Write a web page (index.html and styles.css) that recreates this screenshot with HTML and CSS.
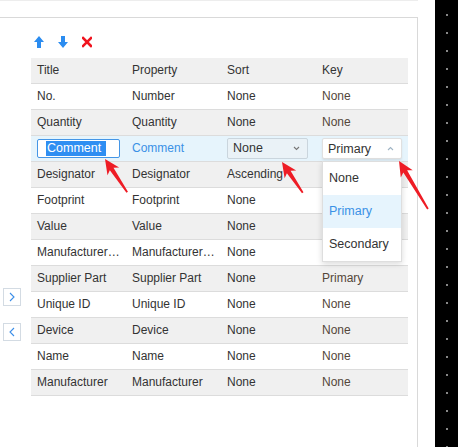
FILE: index.html
```html
<!DOCTYPE html>
<html>
<head>
<meta charset="utf-8">
<link rel="stylesheet" href="styles.css">
</head>
<body>
<div class="page">
  <div class="main">
    <div class="topgap"></div>
    <div class="panel">
      <div class="toolbar">
        <svg class="tool" width="10" height="12" viewBox="0 0 10 12"><path d="M5 0 L10 6 L7 6 L7 12 L3 12 L3 6 L0 6 Z" fill="#2b8cf0"/></svg>
        <svg class="tool" width="10" height="12" viewBox="0 0 10 12"><path d="M3 0 L7 0 L7 6 L10 6 L5 12 L0 6 L3 6 Z" fill="#2b8cf0"/></svg>
        <svg class="tool" width="10" height="12" viewBox="0 0 10 12"><path d="M1 2 L9 10 M9 2 L1 10" stroke="#f0141e" stroke-width="2.6" stroke-linecap="square"/></svg>
      </div>
      <div class="content">
        <div class="side">
          <div class="nav"><svg width="8" height="10" viewBox="0 0 8 10"><path d="M2 1 L6 5 L2 9" fill="none" stroke="#3b8ee8" stroke-width="1.1"/></svg></div>
          <div class="nav"><svg width="8" height="10" viewBox="0 0 8 10"><path d="M6 1 L2 5 L6 9" fill="none" stroke="#3b8ee8" stroke-width="1.1"/></svg></div>
        </div>
        <div class="table">
          <div class="row head"><div class="cell">Title</div><div class="cell">Property</div><div class="cell">Sort</div><div class="cell">Key</div></div>
          <div class="row"><div class="cell">No.</div><div class="cell">Number</div><div class="cell">None</div><div class="cell key">None</div></div>
          <div class="row alt"><div class="cell">Quantity</div><div class="cell">Quantity</div><div class="cell">None</div><div class="cell key">None</div></div>
          <div class="row selected">
            <div class="cell"><div class="edit"><span class="sel">Comment</span></div></div>
            <div class="cell blue">Comment</div>
            <div class="cell"><div class="select sort">None<svg class="chev" width="7" height="5" viewBox="0 0 7 5"><path d="M1 1 L3.5 3.5 L6 1" fill="none" stroke="#777" stroke-width="1.1"/></svg></div></div>
            <div class="cell keycell">
              <div class="select keysel">Primary<svg class="chev" width="7" height="5" viewBox="0 0 7 5"><path d="M1 4 L3.5 1.5 L6 4" fill="none" stroke="#9fb4c4" stroke-width="1.1"/></svg></div>
              <div class="dropdown">
                <div class="opt">None</div>
                <div class="opt active">Primary</div>
                <div class="opt">Secondary</div>
              </div>
            </div>
          </div>
          <div class="row alt"><div class="cell">Designator</div><div class="cell">Designator</div><div class="cell">Ascending</div><div class="cell key covered">Primary</div></div>
          <div class="row"><div class="cell">Footprint</div><div class="cell">Footprint</div><div class="cell">None</div><div class="cell key covered">None</div></div>
          <div class="row alt"><div class="cell">Value</div><div class="cell">Value</div><div class="cell">None</div><div class="cell key covered">None</div></div>
          <div class="row"><div class="cell">Manufacturer…</div><div class="cell">Manufacturer…</div><div class="cell">None</div><div class="cell key covered">None</div></div>
          <div class="row alt"><div class="cell">Supplier Part</div><div class="cell">Supplier Part</div><div class="cell">None</div><div class="cell key">Primary</div></div>
          <div class="row"><div class="cell">Unique ID</div><div class="cell">Unique ID</div><div class="cell">None</div><div class="cell key">None</div></div>
          <div class="row alt"><div class="cell">Device</div><div class="cell">Device</div><div class="cell">None</div><div class="cell key">None</div></div>
          <div class="row"><div class="cell">Name</div><div class="cell">Name</div><div class="cell">None</div><div class="cell key">None</div></div>
          <div class="row alt"><div class="cell">Manufacturer</div><div class="cell">Manufacturer</div><div class="cell">None</div><div class="cell key">None</div></div>
        </div>
      </div>
    </div>
  </div>
  <div class="gutter"></div>
  <div class="strip"></div>
  <svg class="arrows" width="458" height="447" viewBox="0 0 458 447">
    <polygon transform="translate(105 159) rotate(-123.7)" points="0,0 -15,-7 -12,-2.2 -40,-0.9 -40,0.9 -12,2.2 -15,7" fill="#ee1c25"/>
    <polygon transform="translate(282 162) rotate(-124.1)" points="0,0 -15,-7 -12,-2.2 -37,-0.9 -37,0.9 -12,2.2 -15,7" fill="#ee1c25"/>
    <polygon transform="translate(399 161) rotate(-121.1)" points="0,0 -15,-7 -12,-2.2 -56,-0.9 -56,0.9 -12,2.2 -15,7" fill="#ee1c25"/>
  </svg>
</div>
</body>
</html>
```

FILE: styles.css
```css
* { box-sizing: border-box; }
html, body { margin: 0; padding: 0; }
body {
  font-family: "Liberation Sans", Arial, sans-serif;
  font-size: 12px;
  color: #333;
  background: #fff;
}
.page {
  position: relative;
  display: flex;
  width: 458px;
  height: 447px;
  overflow: hidden;
}
.main {
  width: 418px;
  display: flex;
  flex-direction: column;
}
.topgap {
  height: 17px;
  border-top: 1px solid #ededed;
}
.panel {
  flex: 1;
  border-top: 1px solid #d9d9d9;
  border-right: 1px solid #d9d9d9;
  display: flex;
  flex-direction: column;
}
.toolbar {
  display: flex;
  gap: 14px;
  padding: 18px 0 0 34px;
  height: 30px;
  margin-bottom: 10px;
}
.tool { display: block; }
.content {
  display: flex;
}
.side {
  width: 31px;
  padding: 230px 0 0 3px;
  display: flex;
  flex-direction: column;
  gap: 17px;
}
.nav {
  width: 18px;
  height: 18px;
  border: 1px solid #d3dbe3;
  background: #fff;
  display: flex;
  align-items: center;
  justify-content: center;
}
.table {
  width: 377px;
}
.row {
  display: grid;
  grid-template-columns: 95px 95px 95px 92px;
  height: 26px;
  border-bottom: 1px solid #dcdcdc;
  background: #fff;
}
.row.head,
.row.alt {
  background: #f0f0f0;
}
.row.selected {
  background: #e6f4fc;
}
.cell {
  padding: 0 0 1px 6px;
  display: flex;
  align-items: center;
  white-space: nowrap;
}
.cell.key { color: #54473a; }
.cell.covered { visibility: hidden; }
.cell.blue { color: #3a91e6; }
.edit {
  width: 83px;
  height: 19px;
  border: 1px solid #4596e6;
  border-radius: 2px;
  background: #fff;
  padding: 1px 0 1px 8px;
  display: flex;
}
.sel {
  background: #2f8ef2;
  color: #fff;
  padding: 0 5px 0 1px;
  display: flex;
  align-items: center;
  font-size: 12.5px;
}
.select {
  height: 21px;
  border: 1px solid #d4dde4;
  border-radius: 2px;
  display: flex;
  align-items: center;
  justify-content: space-between;
  padding: 0 7px 0 5px;
  font-size: 12.5px;
}
.select.sort {
  width: 81px;
  background: #eaf2f7;
  border-color: #cad5dd;
}
.select.keysel {
  width: 80px;
  background: #fff;
  border-color: #e0e0e0;
  box-shadow: 0 1px 2px rgba(0,0,0,0.08);
}
.keycell { position: relative; padding-bottom: 0; }
.dropdown {
  position: absolute;
  top: 25px;
  left: 6px;
  width: 80px;
  background: #fff;
  border: 1px solid #dedede;
  box-shadow: 0 2px 6px rgba(0,0,0,0.15);
  z-index: 5;
}
.opt {
  height: 33px;
  display: flex;
  align-items: center;
  padding: 0 0 1px 6px;
  color: #333;
  font-size: 12.5px;
}
.opt.active {
  background: #e6f4fd;
  color: #3a91e6;
}
.gutter {
  width: 17px;
}
.strip {
  width: 23px;
  background-color: #000;
  background-image: radial-gradient(circle at 12px 9px, #8a8a8a 0, #8a8a8a 0.7px, transparent 1.2px);
  background-size: 23px 18px;
  background-position: 0 6px;
}
.arrows {
  position: absolute;
  top: 0;
  left: 0;
  pointer-events: none;
  z-index: 10;
}
```
